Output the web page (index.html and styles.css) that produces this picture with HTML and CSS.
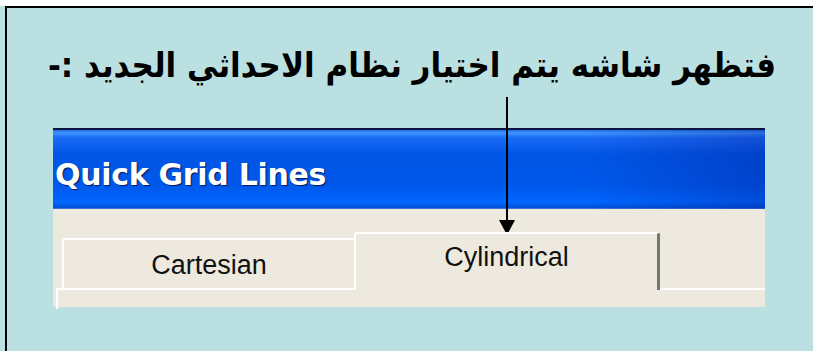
FILE: index.html
```html
<!DOCTYPE html>
<html lang="ar">
<head>
  <meta charset="UTF-8" />
  <title>Quick Grid Lines</title>
  <link rel="stylesheet" href="styles.css">
</head>
<body>
  <div class="frame">
    <h1 class="heading" dir="rtl">فتظهر شاشه يتم اختيار نظام الاحداثي الجديد :-</h1>

    <div class="window">
      <div class="titlebar">Quick Grid Lines</div>
      <div class="client">
        <div class="tabs">
          <div class="tab">Cartesian</div>
          <div class="tab selected">Cylindrical</div>
        </div>
        <div class="panel"></div>
      </div>
    </div>

    <div class="arrow">
      <div class="arrow-line"></div>
      <div class="arrow-head"></div>
    </div>
  </div>
</body>
</html>
```

FILE: styles.css
```css
body { margin: 0; height: 351px; overflow: hidden; background: linear-gradient(#fff 0 6px, #bbe0e2 6px); font-family: 'Liberation Sans', Arial, sans-serif; }
.frame { position: relative; margin: 6px 0 0 5px; height: 345px; border-top: 2px solid #000; border-left: 2px solid #000; background: #bbe0e2; }
.heading { margin: 0; padding: 35px 0 0 4px; height: 90px; box-sizing: border-box; text-align: center; white-space: nowrap; font-family: 'DejaVu Sans Condensed', 'DejaVu Sans', sans-serif; font-stretch: condensed; font-weight: bold; font-size: 34.5px; line-height: 44px; color: #000; }
.window { margin: 30px 0 0 46px; width: 712px; height: 179px; background: #ede9df; }
.titlebar { height: 81px; box-sizing: border-box; border-top: 2px solid #0a1640; padding: 30px 0 0 2px; color: #fff; font-family: 'DejaVu Sans', sans-serif; font-weight: bold; font-size: 30px; line-height: 30px; letter-spacing: -0.3px; text-shadow: 1px 1px 1px #0a1a60;
  background: linear-gradient(90deg, rgba(0,0,0,0) 75%, rgba(0,20,140,0.3) 100%), linear-gradient(#1f6ee8 0, #3d95ff 3px, #1a6af5 8px, #0055e5 25px, #0058ea 55px, #0066ff 72px, #0050d8 78px, #6f95d8 79px); }
.client { padding-top: 23px; }
.tabs { display: flex; align-items: flex-end; padding-left: 9px; height: 56px; }
.tab { height: 50px; box-sizing: border-box; display: flex; justify-content: center; padding-top: 12px; font-size: 27px; line-height: 26px; color: #111; border-top: 2px solid #fff; border-left: 2px solid #fff; border-right: 2px solid #f6f4ee; border-radius: 3px 3px 0 0; }
.tab:first-child { width: 294px; }
.tab.selected { position: relative; z-index: 1; width: 306px; height: 58px; margin: 0 0 -2px -2px; padding-top: 10px; background: #ede9df; border-right: 3px solid #77756c; }
.panel { margin-left: 3px; height: 19px; border-top: 2px solid #fff; border-left: 2px solid #fff; }
.arrow { position: absolute; left: 492px; top: 89px; width: 16px; display: flex; flex-direction: column; align-items: center; }
.arrow-line { width: 2px; height: 123px; background: #000; }
.arrow-head { width: 0; height: 0; border-left: 8px solid transparent; border-right: 8px solid transparent; border-top: 15px solid #000; }
```
